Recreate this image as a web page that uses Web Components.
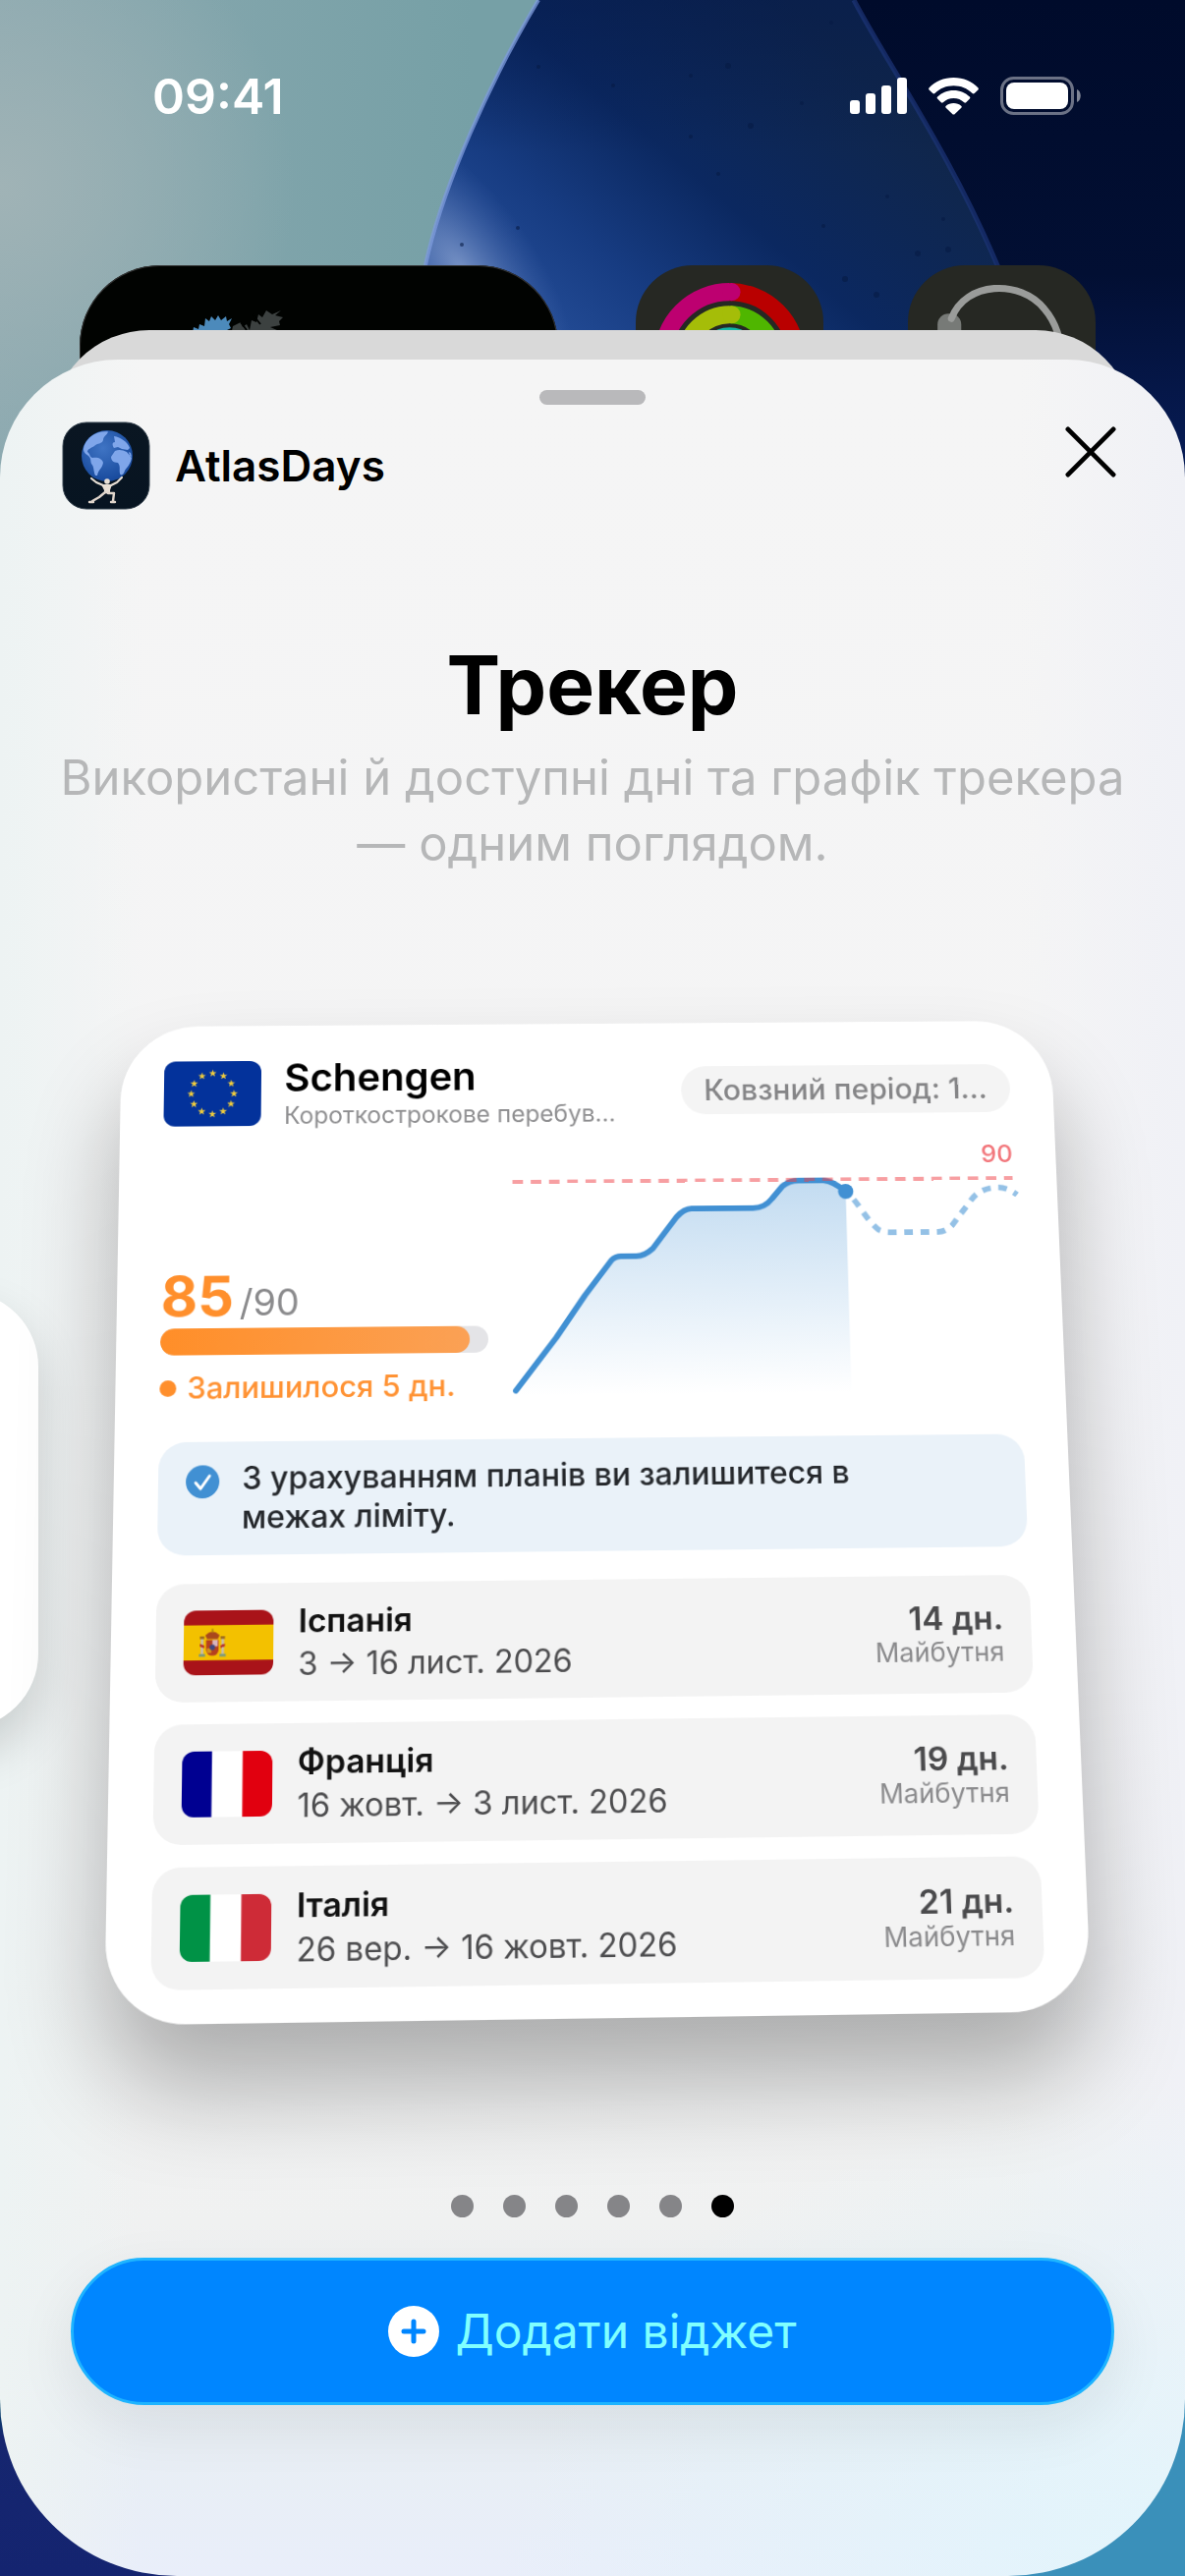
<!DOCTYPE html>
<html lang="uk">
<head>
<meta charset="utf-8">
<meta name="viewport" content="width=device-width, initial-scale=1">
<title>AtlasDays</title>
<style>
  body {
    margin: 0;
    font-family: Inter, "Noto Sans", sans-serif;
    color: #000;
    background: #06123a;
  }
</style>
</head>
<body>
<phone-screen>
  <wall-paper slot="back"></wall-paper>
  <home-screen slot="home"></home-screen>
  <widget-sheet>
    <sheet-header>AtlasDays</sheet-header>
    <widget-intro>
      <span slot="title">Трекер</span>
      Використані й доступні дні та графік трекера — одним поглядом.
    </widget-intro>
    <widget-carousel>
      <tracker-card>
        <tracker-head slot="head">
          <flag-icon slot="flag" country="eu"></flag-icon>
          <span slot="name">Schengen</span>
          <span slot="note">Короткострокове перебув…</span>
          <span slot="period">Ковзний період: 1…</span>
        </tracker-head>
        <usage-meter slot="meter" used="85" limit="90">Залишилося 5 дн.</usage-meter>
        <usage-chart slot="chart" limit="90"></usage-chart>
        <info-banner slot="info">З урахуванням планів ви залишитеся в межах ліміту.</info-banner>
        <trip-row country="es" days="14 дн." status="Майбутня" dates="3 → 16 лист. 2026">Іспанія</trip-row>
        <trip-row country="fr" days="19 дн." status="Майбутня" dates="16 жовт. → 3 лист. 2026">Франція</trip-row>
        <trip-row country="it" days="21 дн." status="Майбутня" dates="26 вер. → 16 жовт. 2026">Італія</trip-row>
      </tracker-card>
    </widget-carousel>
    <page-dots count="6" current="6"></page-dots>
    <add-button>Додати віджет</add-button>
  </widget-sheet>
</phone-screen>

<script>
class BaseElement extends HTMLElement {
  constructor() {
    super();
    this.attachShadow({ mode: 'open' });
  }

  connectedCallback() {
    this.shadowRoot.innerHTML = this.render();
  }
}

class PhoneScreen extends BaseElement {
  render() {
    return `
      <style>
        :host {
          display: grid;
          grid-template-columns: minmax(0, 1fr);
          min-height: 100vh;
          overflow: hidden;
        }
        .layer { grid-area: 1 / 1; display: grid; }
        .sheet { padding-top: 336px; }
      </style>
      <div class="layer"><slot name="back"></slot></div>
      <div class="layer"><slot name="home"></slot></div>
      <div class="layer sheet"><slot></slot></div>
    `;
  }
}
customElements.define('phone-screen', PhoneScreen);

class WallPaper extends BaseElement {
  render() {
    const petal = 'M548 0C500 80 450 190 433 270C420 340 420 480 430 620H1075C1070 500 1040 340 1016 275C970 160 900 60 869 0Z';
    return `
      <style>
        :host {
          display: block;
          background: linear-gradient(#7a9fa5 0, #7fa6a8 560px, #005a78 2100px, #00506c 2440px, #16266f 2480px, #142470 100%);
        }
        .base { background: linear-gradient(90deg, transparent 50%, #3a90ba 50%) no-repeat 0 100% / 100% 1400px; height: 100%; }
        svg { display: block; width: 100%; height: 620px; }
      </style>
      <div class="base">
        <svg viewBox="0 0 1206 620" preserveAspectRatio="none" aria-hidden="true">
          <defs>
            <linearGradient id="sky" x1="0" y1="0" x2="1" y2="0">
              <stop offset="0" stop-color="#8ba9b0"/>
              <stop offset=".4" stop-color="#76a0a6"/>
            </linearGradient>
            <radialGradient id="mist" cx="0" cy="190" r="300" gradientUnits="userSpaceOnUse">
              <stop offset="0" stop-color="#a0b3b6"/>
              <stop offset="1" stop-color="#a0b3b6" stop-opacity="0"/>
            </radialGradient>
            <linearGradient id="petal" x1="480" y1="370" x2="800" y2="0" gradientUnits="userSpaceOnUse">
              <stop offset="0" stop-color="#2c57a4"/>
              <stop offset=".35" stop-color="#173c82"/>
              <stop offset=".6" stop-color="#0b2860"/>
              <stop offset="1" stop-color="#10264a"/>
            </linearGradient>
            <linearGradient id="top" x1="0" y1="0" x2="0" y2="1">
              <stop offset="0" stop-color="#04194c" stop-opacity=".5"/>
              <stop offset=".25" stop-color="#04194c" stop-opacity="0"/>
            </linearGradient>
            <radialGradient id="glow" cx="0" cy="0" r="1" gradientUnits="userSpaceOnUse" gradientTransform="translate(470 275) rotate(55) scale(170 75)">
              <stop offset="0" stop-color="#8ba3d0" stop-opacity=".8"/>
              <stop offset="1" stop-color="#4f70b4" stop-opacity="0"/>
            </radialGradient>
            <linearGradient id="night" x1="0" y1="0" x2="0" y2="1">
              <stop offset="0" stop-color="#000b2b"/>
              <stop offset=".45" stop-color="#020f33"/>
              <stop offset="1" stop-color="#0b2670"/>
            </linearGradient>
          </defs>
          <rect width="1206" height="620" fill="url(#sky)"/>
          <rect width="1206" height="620" fill="url(#mist)"/>
          <path d="M840 0H1206V620H840Z" fill="url(#night)"/>
          <path d="${petal}" fill="url(#petal)"/>
          <path d="${petal}" fill="url(#top)"/>
          <path d="${petal}" fill="url(#glow)"/>
          <path d="M548 0C500 80 450 190 433 270" fill="none" stroke="#7d9bdc" stroke-opacity=".75" stroke-width="4"/>
          <path d="M1017 275C970 160 900 60 869 0" fill="none" stroke="#1d3478" stroke-opacity=".7" stroke-width="5"/>
          <g fill="#071b45" fill-opacity=".6">
            <circle cx="741" cy="67" r="3"/><circle cx="703" cy="77" r="2"/><circle cx="764" cy="128" r="3"/>
            <circle cx="624" cy="87" r="2"/><circle cx="703" cy="139" r="2"/><circle cx="527" cy="232" r="2"/>
            <circle cx="470" cy="249" r="2"/><circle cx="934" cy="258" r="3"/><circle cx="965" cy="254" r="3"/>
            <circle cx="903" cy="200" r="2"/><circle cx="838" cy="230" r="2"/><circle cx="960" cy="223" r="2"/>
            <circle cx="846" cy="23" r="2"/><circle cx="548" cy="68" r="2"/><circle cx="731" cy="177" r="2"/>
            <circle cx="816" cy="105" r="2"/><circle cx="860" cy="284" r="3"/><circle cx="892" cy="300" r="3"/>
          </g>
        </svg>
      </div>
    `;
  }
}
customElements.define('wall-paper', WallPaper);

class HomeScreen extends BaseElement {
  render() {
    return `
      <style>
        :host { display: block; color: #fff; }
        .status {
          display: flex;
          justify-content: space-between;
          align-items: center;
          height: 60px;
          padding: 68px 106px 0 155px;
        }
        time { font-size: 50px; font-weight: 600; line-height: 60px; }
        .signs { display: flex; align-items: center; gap: 22px; }
        svg { display: block; }
        .apps {
          display: grid;
          grid-template-columns: 480px 191px 191px;
          column-gap: 86px;
          align-items: start;
          padding: 142px 0 0 81px;
        }
        .tile { height: 191px; border-radius: 58px; overflow: hidden; background: #262823; }
        .wide { width: 487px; height: 487px; border-radius: 82px; background: #010301; box-shadow: inset 0 0 0 1px #333; }
      </style>
      <div class="status">
        <time>09:41</time>
        <div class="signs">
          <svg width="58" height="38" viewBox="0 0 58 38" fill="#fff" aria-hidden="true">
            <rect x="0" y="23" width="10" height="14" rx="3"/>
            <rect x="16" y="16" width="10" height="21" rx="3"/>
            <rect x="32" y="8" width="10" height="29" rx="3"/>
            <rect x="48" y="0" width="10" height="37" rx="3"/>
          </svg>
          <svg width="51" height="38" viewBox="0 0 51 38" fill="#fff" aria-hidden="true">
            <path d="M25.500 0C35.500 0 44.500 4 50.300 10.200C51 11 51 11.700 50.400 12.400L46.700 16C46 16.600 45.300 16.600 44.600 16C39.500 11 32.800 8.300 25.500 8.300S11.500 11 6.400 16C5.700 16.600 5 16.600 4.300 16L.6 12.400C0 11.700 0 11 .7 10.200C6.500 4 15.500 0 25.500 0Z"/>
            <path d="M25.500 13C32 13 37.700 15.500 41.900 19.600C42.500 20.300 42.500 21 41.900 21.600L38.200 25.200C37.500 25.800 36.900 25.800 36.200 25.200C33.300 22.600 29.600 21 25.500 21S17.700 22.600 14.800 25.200C14.100 25.800 13.500 25.800 12.800 25.200L9.100 21.600C8.500 21 8.500 20.300 9.100 19.600C13.300 15.500 19 13 25.500 13Z"/>
            <path d="M25.500 26C28.500 26 31.200 27 33.200 28.800C33.900 29.500 33.900 30.200 33.300 30.800L26.800 37C26 37.700 25 37.700 24.200 37L17.700 30.800C17.100 30.200 17.100 29.500 17.800 28.800C19.800 27 22.500 26 25.500 26Z"/>
          </svg>
          <svg width="82" height="40" viewBox="0 0 82 40" aria-hidden="true">
            <rect x="1.500" y="1.500" width="72" height="36" rx="12" fill="none" stroke="#fff" stroke-opacity=".42" stroke-width="3"/>
            <rect x="6" y="6" width="63" height="27" rx="8" fill="#fff"/>
            <path d="M78 13C83 15 83 24 78 26Z" fill="#fff" fill-opacity=".5"/>
          </svg>
        </div>
      </div>
      <div class="apps" aria-hidden="true">
        <div class="tile wide">
          <svg width="486" height="110" viewBox="0 0 486 110">
            <path d="M114 74L116 63L121 65L122 60L127 62L128 54L132 57L134 52L138 56L141 51L144 56L149 52L150 57L155 54L152 60L154 64L148 67L146 80H114Z" fill="#4c8abb"/>
            <path d="M152 80L156 62L164 58L166 63L170 60L173 66L175 56L180 58L182 50L186 53L190 46L196 50L205 46L199 51L207 53L203 57L204 61L194 63L201 66L213 71V80Z" fill="#3c4140"/>
            <path d="M164 58L170 66M176 50L184 60" stroke="#010301" stroke-width="2"/>
          </svg>
        </div>
        <div class="tile">
          <svg width="191" height="191" viewBox="0 0 190 190" fill="none" stroke-width="18">
            <path d="M95 27A68 68 0 0 0 95 163" stroke="#bd0070"/>
            <path d="M95 27A68 68 0 0 1 95 163" stroke="#b90000"/>
            <path d="M95 50A45 45 0 0 0 95 140" stroke="#a5bd08"/>
            <path d="M95 50A45 45 0 0 1 95 140" stroke="#4fb600"/>
            <circle cx="95" cy="95" r="23" stroke="#12b5a4"/>
            <circle cx="97" cy="27" r="9" fill="#bd0070" stroke="none"/>
            <circle cx="97" cy="50" r="9" fill="#a5bd08" stroke="none"/>
          </svg>
        </div>
        <div class="tile">
          <svg width="191" height="191" viewBox="0 0 190 190">
            <rect x="30" y="49" width="24" height="60" rx="11" fill="#777a77"/>
            <path d="M44 54C58 16 114 14 138 44C150 58 155 74 157 100" fill="none" stroke="#9a9c9a" stroke-width="7" stroke-linecap="round"/>
          </svg>
        </div>
      </div>
    `;
  }
}
customElements.define('home-screen', HomeScreen);

class WidgetSheet extends BaseElement {
  render() {
    return `
      <style>
        :host { display: flex; flex-direction: column; }
        .behind {
          height: 130px;
          margin: 0 52px -100px;
          border-radius: 100px 100px 0 0;
          background: #d9d9d9;
        }
        .sheet {
          position: relative;
          flex: 1;
          display: flex;
          flex-direction: column;
          overflow: hidden;
          border-radius: 120px 120px 180px 180px;
          background:
            radial-gradient(700px 500px at 100% 100%, #e2f5fc, rgba(226, 245, 252, 0)),
            linear-gradient(90deg, #edf3f3, rgba(244, 244, 244, 0) 12%, rgba(244, 244, 244, 0) 86%, #f0f1f6),
            linear-gradient(#f5f5f5 0, #f4f4f5 60%, #f0f1f1 84%, #e8eef4 94%, #e9eefa);
        }
        .grabber {
          align-self: center;
          width: 108px;
          height: 15px;
          margin-top: 31px;
          border-radius: 8px;
          background: #b9b9bb;
        }
      </style>
      <div class="behind"></div>
      <div class="sheet">
        <div class="grabber"></div>
        <slot></slot>
      </div>
    `;
  }
}
customElements.define('widget-sheet', WidgetSheet);

class SheetHeader extends BaseElement {
  render() {
    return `
      <style>
        :host {
          display: flex;
          align-items: center;
          height: 90px;
          margin: 17px 63px 0;
        }
        h2 {
          flex: 1;
          margin: 0 0 0 25px;
          font-size: 44px;
          font-weight: 600;
          line-height: 50px;
        }
        button {
          align-self: flex-start;
          padding: 5px 7px;
          border: 0;
          background: none;
          cursor: pointer;
        }
        svg { display: block; }
      </style>
      <svg width="90" height="90" viewBox="0 0 90 90" aria-hidden="true">
        <defs>
          <radialGradient id="globe" cx=".42" cy=".35" r=".7">
            <stop offset="0" stop-color="#3f74c4"/>
            <stop offset="1" stop-color="#15479a"/>
          </radialGradient>
          <linearGradient id="plate" x1="0" y1="0" x2="0" y2="1">
            <stop offset="0" stop-color="#0a1622"/>
            <stop offset="1" stop-color="#071421"/>
          </linearGradient>
        </defs>
        <rect x="1" y="1" width="88" height="88" rx="24" fill="url(#plate)" stroke="#35424e" stroke-width="1"/>
        <circle cx="46" cy="35" r="26" fill="url(#globe)"/>
        <path d="M23 24C27 15 37 9 47 10.500C46 14 42 15 42 19C41 23 36 22 33 25C30 27 26 28 26 31C29 33 28 36 31 37C37 36 41 38 42 42C41 48 37 49 36 55L34 55C32 51 33 46 30 43C29 40 30 38 27 35C22 32 21 29 23 24Z" fill="#7fa6ea"/>
        <path d="M53 15C60 16 67 21 69 27L67 29L61 28L57 26L53 27C51 24 51 21 54 21ZM54 30C58 28 62 29 66 31L71 37C70 43 66 47 64 50C63 54 60 56 59 53C58 49 60 46 57 42C52 42 50 39 50 36Z" fill="#7fa6ea"/>
        <path d="M68 31L70 32L71 36L69 35Z" fill="#7fa6ea"/>
        <circle cx="46" cy="61" r="2.800" fill="#e7ded4"/>
        <path d="M30 58L35 62L42 65M61 57L56 62L50 65" fill="none" stroke="#e7ded4" stroke-width="2.200" stroke-linecap="round" stroke-linejoin="round"/>
        <path d="M40 64H51L49 70V74L43 73V70Z" fill="#e7ded4"/>
        <path d="M44 72L38 77L31 81M47 73L53 73L52 81M28 82H32M50 82H54" fill="none" stroke="#e0d5cb" stroke-width="2.400" stroke-linecap="round" stroke-linejoin="round"/>
      </svg>
      <h2><slot></slot></h2>
      <button type="button" aria-label="Закрити">
        <svg width="52" height="52" viewBox="0 0 54 54" aria-hidden="true">
          <path d="M3 3L51 51M51 3L3 51" stroke="#000" stroke-width="5" stroke-linecap="round"/>
        </svg>
      </button>
    `;
  }
}
customElements.define('sheet-header', SheetHeader);

class WidgetIntro extends BaseElement {
  render() {
    return `
      <style>
        :host { display: block; margin: 127px 40px 0; text-align: center; }
        h1 { margin: 0; font-size: 82px; font-weight: 700; line-height: 104px; }
        p { margin: 8px 0 0; font-size: 49px; line-height: 67px; color: #b6b7b8; }
      </style>
      <h1><slot name="title"></slot></h1>
      <p><slot></slot></p>
    `;
  }
}
customElements.define('widget-intro', WidgetIntro);

class WidgetCarousel extends BaseElement {
  render() {
    return `
      <style>
        :host {
          display: grid;
          grid-template-columns: 117px minmax(0, 1fr) 115px;
          align-items: center;
          margin-top: 131px;
        }
        .previous {
          width: 200px;
          height: 444px;
          margin: 8px 0 0 -161px;
          border-radius: 76px;
          background: #fff;
          box-shadow: 0 24px 50px rgba(0, 0, 0, .16);
        }
      </style>
      <div class="previous"></div>
      <slot></slot>
    `;
  }
}
customElements.define('widget-carousel', WidgetCarousel);

class TrackerCard extends BaseElement {
  render() {
    return `
      <style>
        :host {
          display: block;
          padding: 37px 45px 33px;
          border-radius: 80px;
          background: #fff;
          box-shadow: 0 60px 95px rgba(0, 0, 0, .29);
          transform: perspective(2000px) rotateX(7deg) rotateY(0.8deg) rotateZ(-0.7deg);
        }
        .stats {
          display: grid;
          grid-template-columns: 336px minmax(0, 1fr);
          column-gap: 26px;
          align-items: end;
          margin: 20px 0 36px;
        }
        .trips { display: flex; flex-direction: column; gap: 22px; margin-top: 29px; }
      </style>
      <slot name="head"></slot>
      <div class="stats">
        <slot name="meter"></slot>
        <slot name="chart"></slot>
      </div>
      <slot name="info"></slot>
      <div class="trips"><slot></slot></div>
    `;
  }
}
customElements.define('tracker-card', TrackerCard);

class TrackerHead extends BaseElement {
  render() {
    return `
      <style>
        :host { display: flex; align-items: center; height: 71px; }
        ::slotted(flag-icon) { width: 101px; height: 70px; }
        .names { flex: 1; margin-left: 24px; white-space: nowrap; }
        h3 { margin: 0; font-size: 41px; font-weight: 600; line-height: 48px; }
        p { margin: 0; font-size: 25px; line-height: 34px; color: #8e8e90; }
        .period {
          padding: 0 24px;
          border-radius: 26px;
          background: #f4f4f4;
          color: #858587;
          font-size: 31px;
          font-weight: 500;
          line-height: 52px;
          white-space: nowrap;
        }
      </style>
      <slot name="flag"></slot>
      <div class="names">
        <h3><slot name="name"></slot></h3>
        <p><slot name="note"></slot></p>
      </div>
      <div class="period"><slot name="period"></slot></div>
    `;
  }
}
customElements.define('tracker-head', TrackerHead);

class UsageMeter extends BaseElement {
  render() {
    const used = Number(this.getAttribute('used'));
    const limit = Number(this.getAttribute('limit'));
    return `
      <style>
        :host { display: block; }
        .value { display: flex; align-items: baseline; gap: 6px; color: #8a8a8c; font-size: 38px; line-height: 54px; }
        b { color: #ff8f2c; font-size: 58px; font-weight: 700; }
        .bar { height: 28px; margin-bottom: 14px; border-radius: 14px; background: #e4e4e7; overflow: hidden; }
        .fill {
          width: ${used / limit * 100}%;
          height: 100%;
          border-radius: 14px;
          background: linear-gradient(90deg, #ff8e28, #fba155);
        }
        .left {
          display: flex;
          align-items: center;
          gap: 11px;
          color: #ff9233;
          font-size: 31px;
          font-weight: 500;
          line-height: 40px;
          white-space: nowrap;
        }
        .left::before { content: ""; width: 17px; height: 17px; border-radius: 50%; background: #ff8f2c; }
      </style>
      <div class="value"><b>${used}</b><span>/${limit}</span></div>
      <div class="bar"><div class="fill"></div></div>
      <div class="left"><slot></slot></div>
    `;
  }
}
customElements.define('usage-meter', UsageMeter);

class UsageChart extends BaseElement {
  render() {
    const line = 'M2 230L44 175L74 131L102 94Q106 90 112 90H126Q135 91 145 82L170 49Q178 40 186 40H250Q262 40 270 30L281 17Q288 11 298 11H324Q334 12 347 23';
    return `
      <style>
        :host { display: block; }
        .limit { color: #f2777c; font-size: 26px; font-weight: 500; line-height: 32px; text-align: right; }
        svg { display: block; width: 100%; height: 244px; overflow: visible; }
      </style>
      <div class="limit">${this.getAttribute('limit')}</div>
      <svg viewBox="0 0 523 244" preserveAspectRatio="none" aria-hidden="true">
        <defs>
          <linearGradient id="area" x1="0" y1="0" x2="0" y2="1">
            <stop offset="0" stop-color="#4190d3" stop-opacity=".32"/>
            <stop offset="1" stop-color="#4190d3" stop-opacity="0"/>
          </linearGradient>
        </defs>
        <path d="${line}V236H2Z" fill="url(#area)"/>
        <path d="${line}" fill="none" stroke="#4190d3" stroke-width="6" stroke-linecap="round" stroke-linejoin="round"/>
        <path d="M0 10H522" stroke="#ef3f46" stroke-opacity=".5" stroke-width="4" stroke-dasharray="11 8"/>
        <path d="M347 23C360 34 366 52 380 64Q386 67 394 67H442Q450 67 457 60L478 33Q488 20 506 20Q516 20 526 28" fill="none" stroke="#4190d3" stroke-opacity=".56" stroke-width="6" stroke-dasharray="9 8" stroke-dashoffset="-12"/>
        <circle cx="347" cy="23" r="8" fill="#4190d3"/>
      </svg>
    `;
  }
}
customElements.define('usage-chart', UsageChart);

class InfoBanner extends BaseElement {
  render() {
    return `
      <style>
        :host {
          display: flex;
          align-items: flex-start;
          gap: 23px;
          padding: 18px 28px;
          border-radius: 28px;
          background: #eaf2f9;
        }
        svg { flex: none; margin-top: 6px; }
        p {
          max-width: 680px;
          margin: 0;
          color: #25282c;
          font-size: 32px;
          font-weight: 500;
          line-height: 40px;
        }
      </style>
      <svg width="34" height="34" viewBox="0 0 34 34" aria-hidden="true">
        <circle cx="17" cy="17" r="17" fill="#4190d3"/>
        <path d="M10 18L15 24L24 11" fill="none" stroke="#fff" stroke-width="3" stroke-linecap="round" stroke-linejoin="round"/>
      </svg>
      <p><slot></slot></p>
    `;
  }
}
customElements.define('info-banner', InfoBanner);

class TripRow extends BaseElement {
  render() {
    return `
      <style>
        :host {
          display: flex;
          align-items: center;
          height: 119px;
          padding: 0 28px;
          border-radius: 28px;
          background: #f3f3f3;
          white-space: nowrap;
        }
        flag-icon { width: 90px; height: 65px; }
        .trip { flex: 1; margin-left: 25px; }
        h4 { margin: 0; color: #111; font-size: 33px; font-weight: 600; line-height: 44px; }
        p { margin: 0; color: #4c4c4e; font-size: 32px; line-height: 44px; }
        .side { text-align: right; }
        .side h4 { color: #4a4a4c; line-height: 36px; }
        .side p { color: #8a8a8c; font-size: 27px; line-height: 34px; }
      </style>
      <flag-icon country="${this.getAttribute('country')}"></flag-icon>
      <div class="trip">
        <h4><slot></slot></h4>
        <p>${this.getAttribute('dates')}</p>
      </div>
      <div class="side">
        <h4>${this.getAttribute('days')}</h4>
        <p>${this.getAttribute('status')}</p>
      </div>
    `;
  }
}
customElements.define('trip-row', TripRow);

class FlagIcon extends BaseElement {
  stars() {
    let out = '';
    for (let i = 0; i < 12; i++) {
      out += `<use href="#star" transform="rotate(${i * 30} 50 35) translate(50 13) rotate(${-i * 30})"/>`;
    }
    return out;
  }

  picture() {
    switch (this.getAttribute('country')) {
      case 'eu':
        return `
          <defs><path id="star" d="M0-4L1-1.200H4L1.600.6L2.400 3.400L0 1.700L-2.400 3.400L-1.600.6L-4-1.200H-1Z"/></defs>
          <rect width="100" height="70" fill="#03329b"/>
          <g fill="#f0cc3c">${this.stars()}</g>`;
      case 'es':
        return `
          <rect width="100" height="70" fill="#a91319"/>
          <rect y="16" width="100" height="38" fill="#f3c100"/>
          <path d="M24 27Q32 19 40 27L38 31H26Z" fill="#a9481c"/>
          <path d="M31 20H33V24H31Z" fill="#b58a10"/>
          <path d="M25 32H39V43Q38 49 32 49Q26 49 25 43Z" fill="#b5401f"/>
          <rect x="32" y="32" width="6" height="7" fill="#d9b4bb"/>
          <rect x="26" y="41" width="5" height="5" fill="#d2901c"/>
          <circle cx="32" cy="40" r="3" fill="#41477e"/>
          <path d="M19 30H22V48H19ZM42 30H45V48H42Z" fill="#c8bda8"/>
          <path d="M18 36L23 38V41L18 39ZM46 36L41 38V41L46 39Z" fill="#b8322a"/>
          <path d="M18 28H23V31H18ZM41 28H46V31H41Z" fill="#9d6b1c"/>
          <path d="M17 47H24V50H17ZM40 47H47V50H40Z" fill="#7e9a78"/>`;
      case 'fr':
        return `
          <rect width="100" height="70" fill="#fff"/>
          <rect width="33" height="70" fill="#000091"/>
          <rect x="67" width="33" height="70" fill="#e1000f"/>`;
      default:
        return `
          <rect width="100" height="70" fill="#fff"/>
          <rect width="33" height="70" fill="#009246"/>
          <rect x="67" width="33" height="70" fill="#ce2b37"/>`;
    }
  }

  render() {
    return `
      <style>
        :host { display: block; flex: none; overflow: hidden; border-radius: 12px; }
        svg { display: block; width: 100%; height: 100%; }
      </style>
      <svg viewBox="0 0 100 70" preserveAspectRatio="none" aria-hidden="true">${this.picture()}</svg>
    `;
  }
}
customElements.define('flag-icon', FlagIcon);

class PageDots extends BaseElement {
  connectedCallback() {
    super.connectedCallback();
    this.shadowRoot.querySelectorAll('button').forEach((btn, i) => {
      btn.addEventListener('click', () => {
        this.setAttribute('current', i + 1);
        this.connectedCallback();
      });
    });
  }

  render() {
    const count = Number(this.getAttribute('count'));
    const current = Number(this.getAttribute('current'));
    let dots = '';
    for (let i = 1; i <= count; i++) {
      dots += `<button type="button" aria-label="${i}" ${i === current ? 'class="on"' : ''}></button>`;
    }
    return `
      <style>
        :host { display: flex; justify-content: center; gap: 30px; margin-top: 192px; }
        button {
          width: 23px;
          height: 23px;
          padding: 0;
          border: 0;
          border-radius: 50%;
          background: #858588;
        }
        .on { background: #000; }
      </style>
      ${dots}
    `;
  }
}
customElements.define('page-dots', PageDots);

class AddButton extends BaseElement {
  render() {
    return `
      <style>
        :host { display: block; margin: 41px 72px 174px; }
        button {
          display: flex;
          align-items: center;
          justify-content: center;
          gap: 16px;
          width: 100%;
          height: 150px;
          border: 3px solid #1eb4ff;
          border-radius: 75px;
          background: #0086ff;
          box-shadow: 0 20px 60px rgba(0, 30, 30, .08);
          color: #80ffff;
          font-family: inherit;
          font-size: 48px;
          line-height: 60px;
          cursor: pointer;
        }
      </style>
      <button type="button">
        <svg width="52" height="52" viewBox="0 0 52 52" aria-hidden="true">
          <circle cx="26" cy="26" r="26" fill="#fff"/>
          <path d="M26 16V36M16 26H36" stroke="#0086ff" stroke-width="5" stroke-linecap="round"/>
        </svg>
        <slot></slot>
      </button>
    `;
  }
}
customElements.define('add-button', AddButton);
</script>
</body>
</html>
